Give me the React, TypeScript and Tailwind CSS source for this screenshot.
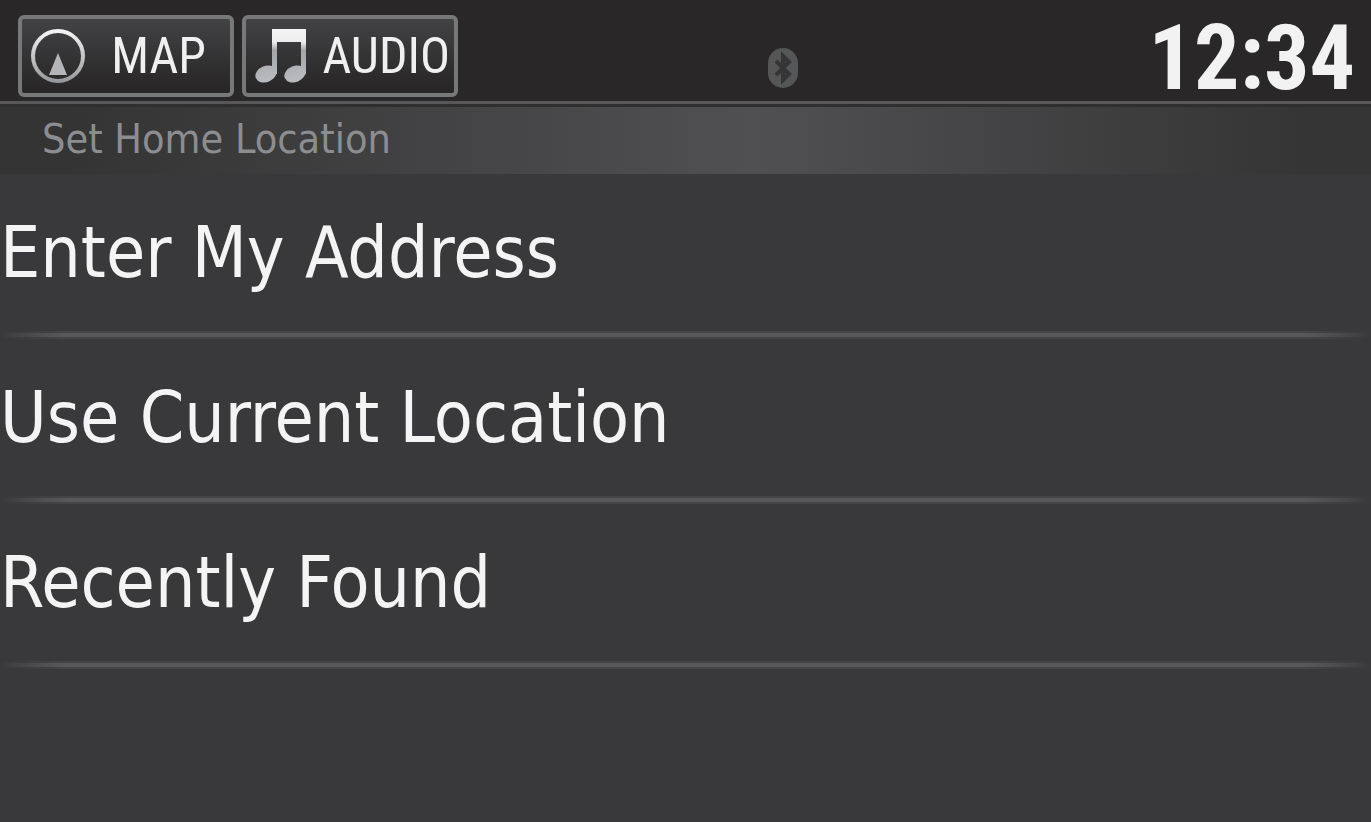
import type { ReactNode } from "react";

const items = ["Enter My Address", "Use Current Location", "Recently Found"];

function CompassIcon() {
  return (
    <svg viewBox="0 0 56 56" className="size-14 shrink-0" fill="none" aria-hidden="true">
      <defs>
        <linearGradient id="ring" x1="0" y1="0" x2="0" y2="1">
          <stop offset="0" stopColor="#f4f4f5" />
          <stop offset="1" stopColor="#97989b" />
        </linearGradient>
      </defs>
      <circle cx="28" cy="28" r="25" stroke="url(#ring)" strokeWidth="4" />
      <path d="M28 25L37 47H19Z" fill="#b4b5b8" />
    </svg>
  );
}

function NotesIcon() {
  return (
    <svg viewBox="0 0 52 56" className="h-14 w-13 shrink-0" aria-hidden="true">
      <defs>
        <linearGradient id="notes" x1="0" y1="0" x2="0" y2="56" gradientUnits="userSpaceOnUse">
          <stop offset="0" stopColor="#f4f4f5" />
          <stop offset="0.25" stopColor="#eeeeef" />
          <stop offset="0.4" stopColor="#a4a5a8" />
          <stop offset="1" stopColor="#bcbdc0" />
        </linearGradient>
      </defs>
      <g fill="url(#notes)">
        <path d="M18 1H52V46H47V14H23V46H18Z" />
        <ellipse cx="12" cy="46" rx="11" ry="8" transform="rotate(-22 12 46)" />
        <ellipse cx="41" cy="46" rx="11" ry="8" transform="rotate(-22 41 46)" />
      </g>
    </svg>
  );
}

function BluetoothIcon() {
  return (
    <svg viewBox="0 0 32 42" className="h-[42px] w-8" fill="none" role="img" aria-label="Bluetooth">
      <rect x="1" y="1" width="30" height="40" rx="15" fill="#555658" />
      <path d="M9 14L22 27L16 33V9L22 15L9 28" stroke="#353536" strokeWidth="4" />
    </svg>
  );
}

function NavButton({ icon, children }: { icon: ReactNode; children: ReactNode }) {
  return (
    <button
      type="button"
      className="flex h-[82px] w-[216px] items-center justify-between rounded-md border-4 border-[#77787a] bg-linear-to-b from-[#424244] to-[#272526] pl-2 font-['Roboto_Condensed','Liberation_Sans',sans-serif] text-[50px] leading-none text-[#f0f0f1]"
    >
      {icon}
      {children}
    </button>
  );
}

export default function App() {
  return (
    <div className="min-h-screen bg-[#39393b] font-['DejaVu_Sans_Condensed','DejaVu_Sans',sans-serif]">
      <header className="grid h-[104px] grid-cols-[4fr_auto_3fr] border-b-3 border-[#58585a] bg-[#292728] pr-4 pl-[18px]">
        <div className="flex gap-2 pt-[15px]">
          <NavButton icon={<CompassIcon />}>
            <span className="pr-6">MAP</span>
          </NavButton>
          <NavButton icon={<NotesIcon />}>
            <span className="pr-1">AUDIO</span>
          </NavButton>
        </div>
        <div className="self-end pb-3 pl-2">
          <BluetoothIcon />
        </div>
        <time className="self-end justify-self-end font-['Roboto_Condensed','Liberation_Sans',sans-serif] text-[90px] leading-[84px] font-bold text-[#f2f2f3]">
          12:34
        </time>
      </header>

      <main>
        <h1 className="h-[70px] border-t-3 border-[#2f2f30] bg-linear-to-r from-[#343435] from-5% via-[#505052] via-55% to-[#353536] to-95% pl-[42px] text-[41px] leading-[64px] text-[#8c8d90]">
          Set Home Location
        </h1>
        <ul>
          {items.map((item) => (
            <li key={item}>
              <button type="button" className="block h-[157px] w-full text-left text-[71px] leading-[157px] text-[#f4f4f5]">
                {item}
              </button>
              <div className="bg-[linear-gradient(to_right,transparent,#454547_5%,#454547_95%,transparent)] py-[2px]">
                <div className="h-[4px] bg-[linear-gradient(to_right,transparent,#58585a_5%,#58585a_95%,transparent)]" />
              </div>
            </li>
          ))}
        </ul>
      </main>
    </div>
  );
}
